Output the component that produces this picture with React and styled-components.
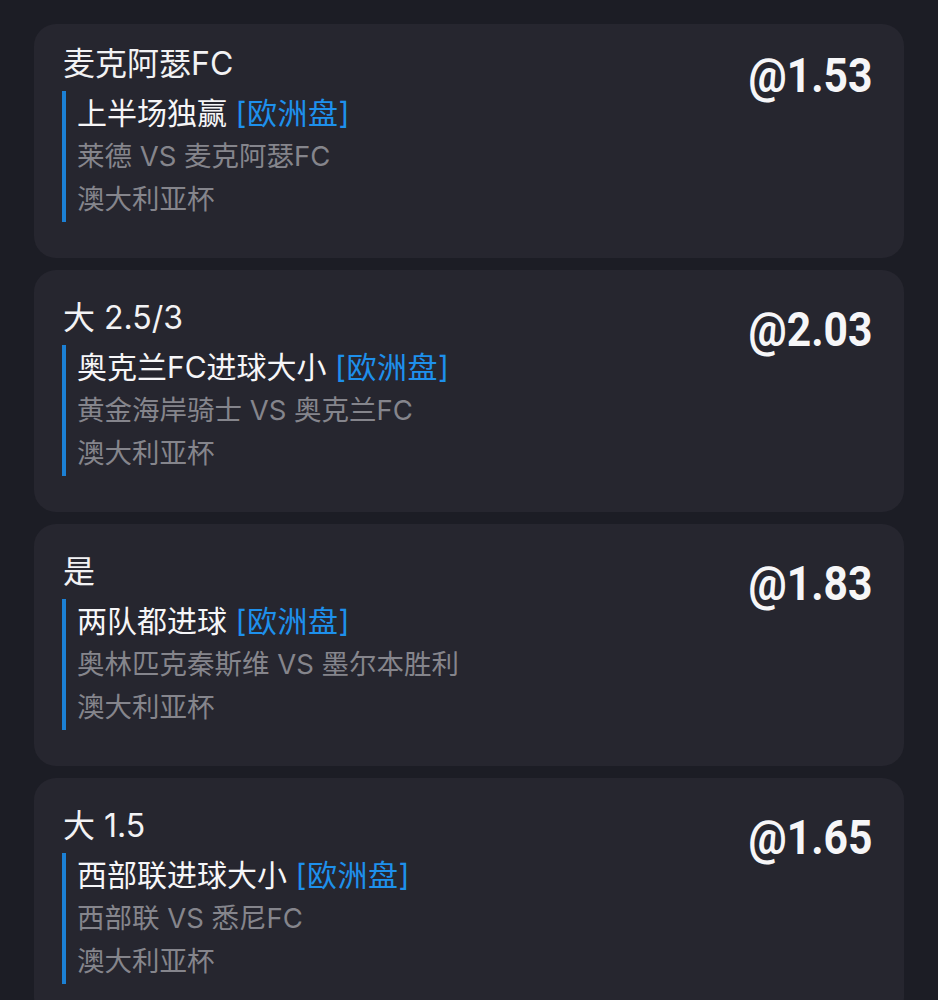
import styled, { createGlobalStyle } from "styled-components";

const GlobalStyle = createGlobalStyle`
  html, body {
    margin: 0;
    padding: 0;
    background: #1c1d25;
  }
  body {
    font-family: "Inter", "Noto Sans CJK SC", sans-serif;
    -webkit-font-smoothing: antialiased;
  }
`;

const Page = styled.div`
  display: flex;
  flex-direction: column;
  gap: 12px;
  padding: 24px 34px 40px;
  min-height: 1000px;
  box-sizing: border-box;
  background: #1c1d25;
`;

const Card = styled.div`
  display: flex;
  align-items: flex-start;
  background: #26262f;
  border-radius: 22px;
  padding: ${(p) => (p.$first ? "20px" : "28px")} 32px 36px 28px;
`;

const Info = styled.div`
  flex: 1;
  display: flex;
  flex-direction: column;
  gap: 7px;
`;

const Pick = styled.div`
  font-size: 32px;
  line-height: 40px;
  color: #f2f2f4;
  padding-left: 1px;
`;

const Detail = styled.div`
  border-left: 4px solid #1c80d4;
  padding-left: 11px;
  display: flex;
  flex-direction: column;
  padding-top: 1px;
  padding-bottom: 1px;
`;

const Market = styled.div`
  font-size: 30px;
  line-height: 43px;
  color: #f6f6f8;
  white-space: nowrap;
`;

const Tag = styled.span`
  color: #1e90ec;
  letter-spacing: 0.5px;
`;

const Sub = styled.div`
  font-size: 27.5px;
  line-height: 43px;
  color: #85858c;
  white-space: nowrap;
`;

const Odds = styled.div`
  margin-top: 4px;
  font-family: "Roboto", "Liberation Sans", sans-serif;
  font-weight: 700;
  font-size: 49px;
  line-height: 56px;
  color: #f6f6f8;
  transform: scaleX(0.87);
  transform-origin: right center;
  white-space: nowrap;
`;

const bets = [
  {
    pick: "麦克阿瑟FC",
    market: "上半场独赢",
    match: "莱德 VS 麦克阿瑟FC",
    league: "澳大利亚杯",
    odds: "1.53",
  },
  {
    pick: "大 2.5/3",
    market: "奥克兰FC进球大小",
    match: "黄金海岸骑士 VS 奥克兰FC",
    league: "澳大利亚杯",
    odds: "2.03",
  },
  {
    pick: "是",
    market: "两队都进球",
    match: "奥林匹克秦斯维 VS 墨尔本胜利",
    league: "澳大利亚杯",
    odds: "1.83",
  },
  {
    pick: "大 1.5",
    market: "西部联进球大小",
    match: "西部联 VS 悉尼FC",
    league: "澳大利亚杯",
    odds: "1.65",
  },
];

const App = () => {
  return (
    <>
      <GlobalStyle />
      <Page>
        {bets.map((bet, i) => (
          <Card key={i} $first={i === 0}>
            <Info>
              <Pick>{bet.pick}</Pick>
              <Detail>
                <Market>
                  {bet.market} <Tag>[欧洲盘]</Tag>
                </Market>
                <Sub>{bet.match}</Sub>
                <Sub>{bet.league}</Sub>
              </Detail>
            </Info>
            <Odds>@{bet.odds}</Odds>
          </Card>
        ))}
      </Page>
    </>
  );
};

export default App;
